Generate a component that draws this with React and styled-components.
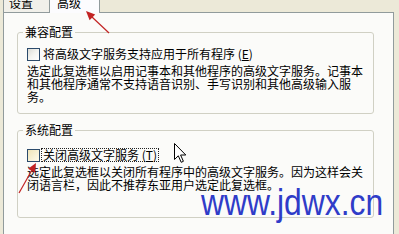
import React from 'react'
import styled, { createGlobalStyle } from 'styled-components'

const GlobalStyle = createGlobalStyle`
  html, body {
    margin: 0;
    padding: 0;
    background: #ece9d8;
  }
  body {
    font-family: "Noto Sans CJK SC", "DejaVu Sans", sans-serif;
    font-size: 12px;
    color: #000;
  }
`

const Screen = styled.div`
  position: relative;
  width: 399px;
  height: 234px;
  overflow: hidden;
  display: flex;
  flex-direction: column;
  background: #ece9d8;
`

const TabRow = styled.div`
  position: relative;
  z-index: 1;
  display: flex;
  align-items: flex-end;
  height: 13px;
  margin-bottom: -1px;
  padding-left: 3px;
  overflow: hidden;
`

const Tab = styled.div`
  box-sizing: border-box;
  width: ${p => p.w}px;
  height: 20px;
  padding: 3px 0 0 ${p => p.pad}px;
  line-height: 12px;
  border: 1px solid #919b9c;
  border-bottom: ${p => (p.active ? 'none' : '1px solid #919b9c')};
  border-left: ${p => (p.active ? '1px solid #919b9c' : '1px solid #919b9c')};
  margin-left: ${p => (p.active ? '-1px' : '0')};
  background: ${p => (p.active ? '#fcfcfe' : '#f1f0ea')};
  white-space: nowrap;
`

const Panel = styled.div`
  flex: 1;
  box-sizing: border-box;
  width: 391px;
  margin-left: 3px;
  padding: 12px 0 0 13px;
  border: 1px solid #919b9c;
  border-bottom: none;
  background: #fbfbf9;
  display: flex;
  flex-direction: column;
  gap: 9px;
`

const Group = styled.fieldset`
  box-sizing: border-box;
  width: 357px;
  margin: 0;
  padding: ${p => p.top}px 9px ${p => p.bottom}px 9px;
  border: 1px solid #d0d0c4;
  border-radius: 3px;
  min-inline-size: 0;
`

const Legend = styled.legend`
  padding: 0 2px;
  margin-left: -4px;
  line-height: 14px;
  font-size: 12px;
`

const CheckRow = styled.label`
  display: flex;
  align-items: center;
  height: 14px;
  margin-bottom: 3px;
  line-height: 14px;
  white-space: nowrap;
`

const Box = styled.span`
  box-sizing: border-box;
  display: inline-block;
  width: 13px;
  height: 13px;
  border: 1px solid #2b4a6b;
  background: ${p =>
    p.hover
      ? 'linear-gradient(135deg, #efe4b8 0%, #f8f2d8 60%, #fffbea 100%)'
      : 'linear-gradient(135deg, #dcdcd6 0%, #f4f4f0 50%, #ffffff 100%)'};
  margin-right: ${p => (p.hover ? 1 : 3)}px;
  flex-shrink: 0;
`

const Caption = styled.span`
  padding: 0 ${p => (p.focus ? 1 : 0)}px;
  border: ${p => (p.focus ? '1px dotted #222' : 'none')};
  line-height: 12px;
`

const Key = styled.span`
  text-decoration: underline;
`

const Description = styled.div`
  line-height: 13px;
  white-space: nowrap;
`

const Watermark = styled.div`
  position: absolute;
  left: 201px;
  top: 184px;
  z-index: 3;
  font-family: "Liberation Sans", Arial, sans-serif;
  font-size: 37px;
  line-height: 37px;
  color: #2f3cc8;
  white-space: nowrap;
  transform: scaleX(0.86);
  transform-origin: left top;
`

const Overlay = styled.svg`
  position: absolute;
  left: 0;
  top: 0;
  z-index: 4;
  pointer-events: none;
`

const groups = [
  {
    title: '兼容配置',
    label: '将高级文字服务支持应用于所有程序 ',
    key: 'E',
    top: 8,
    bottom: 10,
    lines: [
      '选定此复选框以启用记事本和其他程序的高级文字服务。记事本',
      '和其他程序通常不支持语音识别、手写识别和其他高级输入服',
      '务。',
    ],
  },
  {
    title: '系统配置',
    label: '关闭高级文字服务 ',
    key: 'T',
    focus: true,
    top: 11,
    bottom: 26,
    lines: [
      '选定此复选框以关闭所有程序中的高级文字服务。因为这样会关',
      '闭语言栏，因此不推荐东亚用户选定此复选框。',
    ],
  },
]

const App = () => (
  <Screen>
    <GlobalStyle />
    <TabRow>
      <Tab w={47} pad={5}>设置</Tab>
      <Tab w={51} pad={7} active>高级</Tab>
    </TabRow>
    <Panel>
      {groups.map(g => (
        <Group key={g.title} top={g.top} bottom={g.bottom}>
          <Legend>{g.title}</Legend>
          <CheckRow>
            <Box hover={g.focus} />
            <Caption focus={g.focus}>
              {g.label}(<Key>{g.key}</Key>)
            </Caption>
          </CheckRow>
          <Description>
            {g.lines.map(line => (
              <div key={line}>{line}</div>
            ))}
          </Description>
        </Group>
      ))}
    </Panel>
    <Watermark>www.jdwx.cn</Watermark>
    <Overlay width="399" height="234" viewBox="0 0 399 234">
      {/* red arrow to the tab */}
      <line x1="109" y1="33" x2="92" y2="17" stroke="#c22323" strokeWidth="1.2" />
      <polygon points="86,11 95.2,14.6 89.6,20.2" fill="#c22323" />
      {/* red arrow to the checkbox */}
      <line x1="19" y1="193" x2="32" y2="170" stroke="#c22323" strokeWidth="1.2" />
      <polygon points="36,163 35.1,172.8 28.1,168.8" fill="#c22323" />
      {/* mouse cursor */}
      <path
        d="M174.5 143.5 L174.5 159.5 L178.3 155.8 L181.2 162.3 L183.4 161.3 L180.6 155 L185.8 155 Z"
        fill="#fff"
        stroke="#000"
        strokeWidth="1"
        strokeLinejoin="round"
      />
    </Overlay>
  </Screen>
)

export default App
